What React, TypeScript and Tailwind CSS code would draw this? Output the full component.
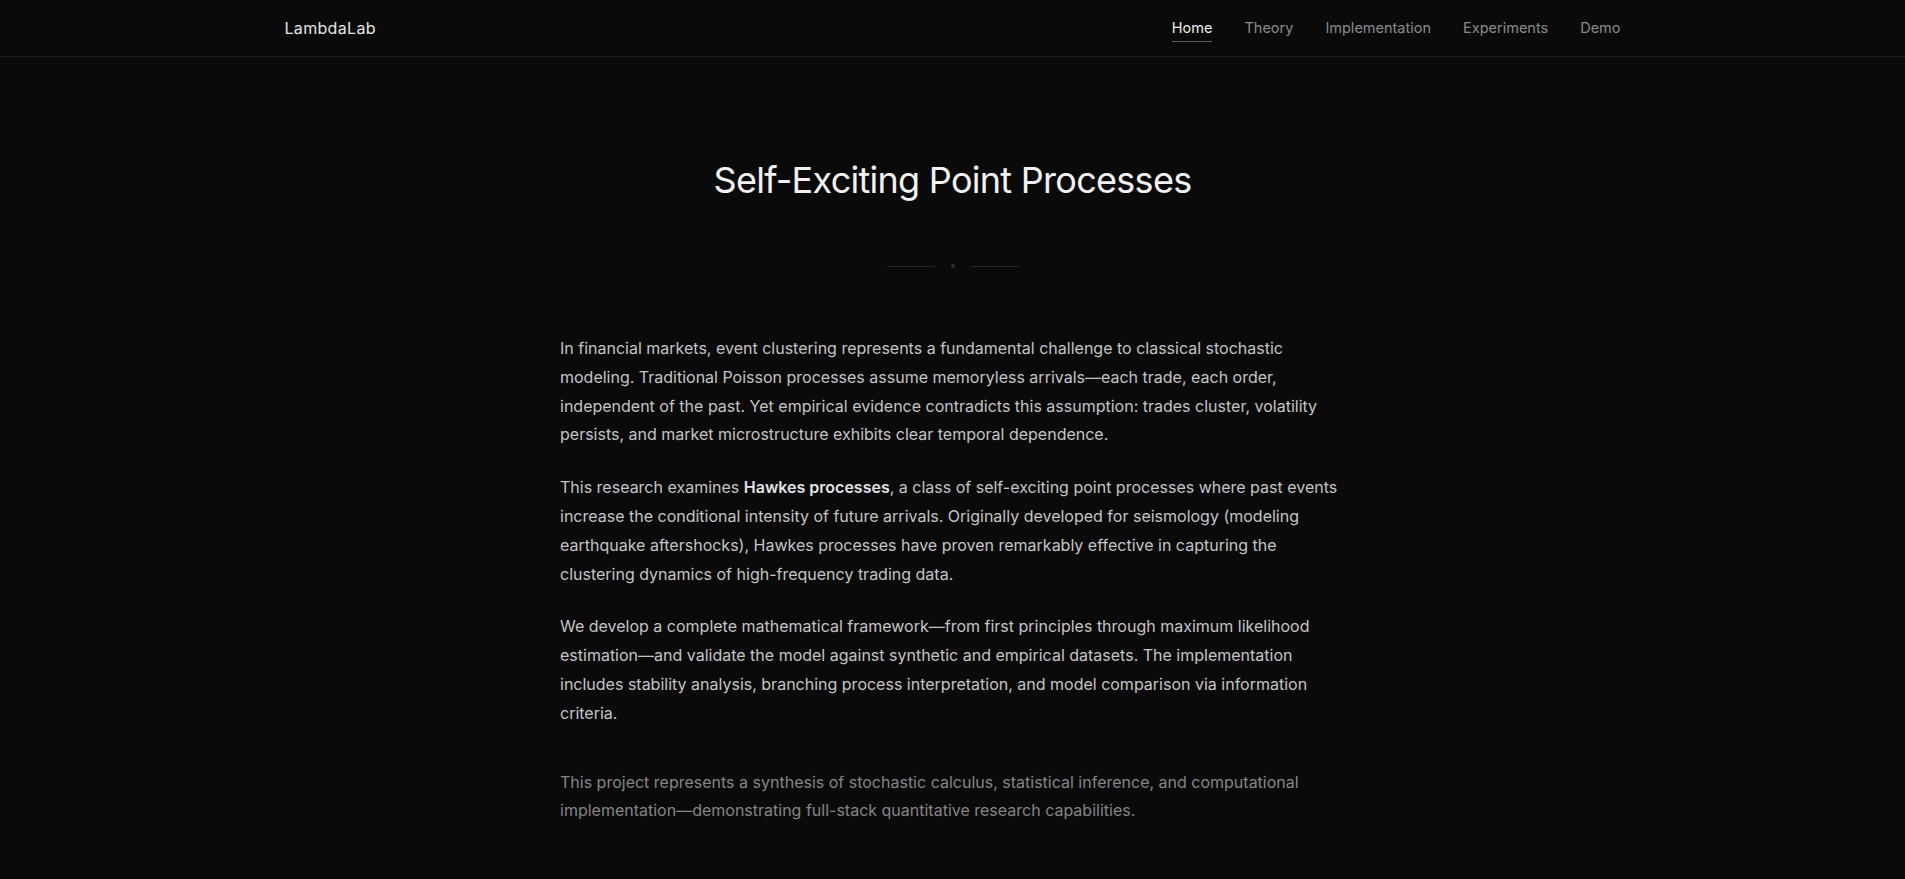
import React from "react";

const links = ["Home", "Theory", "Implementation", "Experiments", "Demo"];

export default function App() {
  return (
    <div
      className="min-h-screen bg-[#0a0a0a] text-[#ededed]"
      style={{ fontFamily: "Inter, 'Noto Sans', sans-serif" }}
    >
      <header className="border-b border-[#1c1c1c]">
        <nav className="mx-auto flex h-14 max-w-[1400px] items-center justify-between px-8">
          <span className="text-[16px] tracking-[0.02em] text-[#e5e5e5]">LambdaLab</span>
          <ul className="-mt-0.5 flex items-center gap-8">
            {links.map((l, i) => (
              <li key={l}>
                <a
                  href="#"
                  className={
                    i === 0
                      ? "border-b border-[#5a5a5a] pb-[5px] text-[14.5px] text-[#ededed]"
                      : "pb-[5px] text-[14.5px] text-[#8a8a8a]"
                  }
                >
                  {l}
                </a>
              </li>
            ))}
          </ul>
        </nav>
      </header>

      <main className="mx-auto max-w-[785px] pb-24 pt-[101px]">
        <h1 className="text-center text-[36px] font-normal leading-tight tracking-[-0.02em] text-[#f2f2f2]">
          Self-Exciting Point Processes
        </h1>

        <div className="mt-[61px] flex items-center justify-center gap-4">
          <span className="h-px w-12 bg-[#262626]" />
          <span className="h-1 w-1 rounded-full bg-[#2e2e2e]" />
          <span className="h-px w-12 bg-[#262626]" />
        </div>

        <div className="mt-[66px] space-y-6 text-[16px] leading-[1.8] text-[#c4c4c4]">
          <p>
            In financial markets, event clustering represents a fundamental challenge to classical
            stochastic modeling. Traditional Poisson processes assume memoryless arrivals—each trade,
            each order, independent of the past. Yet empirical evidence contradicts this assumption:
            trades cluster, volatility persists, and market microstructure exhibits clear temporal
            dependence.
          </p>
          <p>
            This research examines <strong className="font-semibold text-[#e2e2e2]">Hawkes processes</strong>,
            a class of self-exciting point processes where past events increase the conditional
            intensity of future arrivals. Originally developed for seismology (modeling earthquake
            aftershocks), Hawkes processes have proven remarkably effective in capturing the
            clustering dynamics of high-frequency trading data.
          </p>
          <p>
            We develop a complete mathematical framework—from first principles through maximum
            likelihood estimation—and validate the model against synthetic and empirical datasets.
            The implementation includes stability analysis, branching process interpretation, and
            model comparison via information criteria.
          </p>
        </div>

        <p className="mt-10 text-[16px] leading-[1.8] text-[#858585]">
          This project represents a synthesis of stochastic calculus, statistical inference, and
          computational implementation—demonstrating full-stack quantitative research capabilities.
        </p>
      </main>
    </div>
  );
}
